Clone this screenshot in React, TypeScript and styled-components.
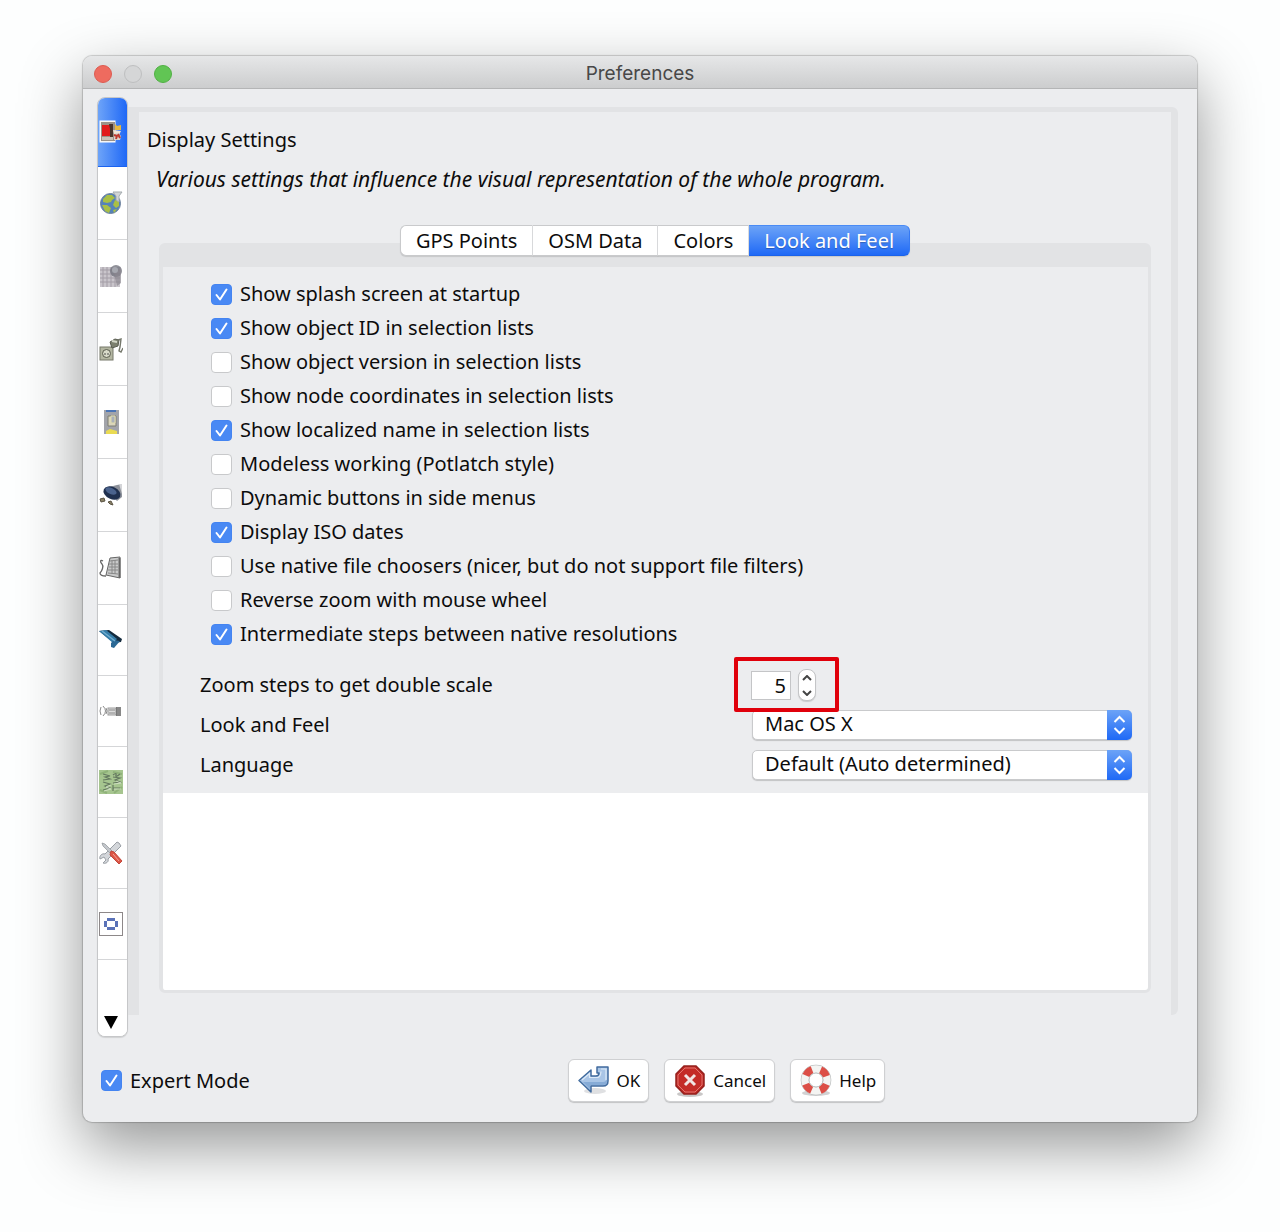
import React, { useState } from "react";
import styled, { createGlobalStyle, css } from "styled-components";

const GlobalStyle = createGlobalStyle`
  * { box-sizing: border-box; }
  body {
    margin: 0;
    background: #fdfefe;
    color: #0c0c0c;
    font-family: "Noto Sans", "Open Sans", sans-serif;
    font-size: 20px;
    line-height: 24px;
  }
  button, input, select { font: inherit; color: inherit; margin: 0; }
`;

const Page = styled.div`
  padding: 56px 83px 110px;
`;

const Window = styled.main`
  border-radius: 9px;
  background: #ecedef;
  box-shadow: 0 0 1px 1px rgba(0, 0, 0, 0.18), 0 24px 62px rgba(0, 0, 0, 0.41);
`;

const TitleBar = styled.header`
  display: grid;
  grid-template-columns: 1fr auto 1fr;
  align-items: center;
  height: 33px;
  padding: 3px 11px 0;
  border-bottom: 1px solid #b4b5b6;
  border-radius: 9px 9px 0 0;
  background: linear-gradient(#e6e7e8, #cccdce);
`;

const Lights = styled.div`
  display: flex;
  gap: 12px;
`;

const Light = styled.button<{ $fill: string; $edge: string }>`
  width: 18px;
  height: 18px;
  padding: 0;
  border: 1px solid ${(p) => p.$edge};
  border-radius: 50%;
  background: ${(p) => p.$fill};
`;

const Title = styled.h1`
  margin: 0;
  color: #484848;
  font: 400 19px/24px Inter, Roboto, sans-serif;
`;

const Body = styled.div`
  display: flex;
  align-items: flex-start;
  padding: 8px 19px 0 14px;
`;

const Sidebar = styled.nav`
  display: flex;
  flex-direction: column;
  flex: none;
  width: 31px;
  border: 1px solid #c6c7c9;
  border-radius: 8px;
  background: #fff;
  box-shadow: 0 1px 1px rgba(0, 0, 0, 0.12);
  overflow: hidden;
`;

const Category = styled.button<{ $tall?: boolean; $active?: boolean }>`
  display: flex;
  align-items: center;
  justify-content: center;
  height: ${(p) => (p.$tall ? 73 : 71)}px;
  padding: 0 3px 0 0;
  border: 0;
  border-bottom: 1px solid #d5d6d8;
  background: #fff;
  ${(p) =>
    p.$active &&
    css`
      height: 69px;
      border-color: #1b63f0;
      background: linear-gradient(90deg, #6ea4f8, #1f68f6);
    `}
`;

const MoreButton = styled.button`
  display: flex;
  align-items: flex-end;
  justify-content: center;
  height: 76px;
  padding: 0 3px 7px 0;
  border: 0;
  background: #fff;
`;

const Group = styled.section`
  flex: 1;
  min-width: 0;
  margin-top: 10px;
  padding: 15px 20px 22px;
  border: solid #e2e3e5;
  border-width: 5px 7px 0 11px;
  border-radius: 0 6px 6px 0;
`;

const Heading = styled.h2`
  margin: 0 0 0 -12px;
  font-size: 20px;
  font-weight: 400;
  line-height: 26px;
`;

const Description = styled.p`
  margin: 14px 0 34px -3px;
  font-size: 21px;
  font-style: italic;
`;

const TabList = styled.div`
  position: relative;
  display: flex;
  justify-content: center;
  margin-bottom: -13px;
`;

const Tab = styled.button<{ $active?: boolean }>`
  height: 31px;
  padding: 0 15px;
  border: 1px solid #c9cacc;
  border-left-width: 0;
  border-right-color: #dddee0;
  background: #fff;
  line-height: 24px;
  white-space: nowrap;
  box-shadow: 0 1px 1px rgba(0, 0, 0, 0.12);
  &:first-child {
    border-left-width: 1px;
    border-radius: 6px 0 0 6px;
  }
  &:last-child {
    border-radius: 0 6px 6px 0;
  }
  ${(p) =>
    p.$active &&
    css`
      border-color: #4a8bf5 #3579f3 #1a62ea;
      background: linear-gradient(#6ca3f7, #1f69f6);
      color: #fff;
      text-shadow: 0 1px 1px rgba(0, 0, 0, 0.25);
    `}
`;

const TabPanel = styled.div`
  border: solid #e2e3e5;
  border-width: 24px 3px 3px 4px;
  border-radius: 6px;
  background: #fff;
`;

const Settings = styled.div`
  padding: 10px 16px 8px 37px;
  background: #ecedef;
`;

const CheckList = styled.ul`
  margin: 0 0 14px;
  padding: 0 0 0 11px;
  list-style: none;
`;

const CheckRow = styled.li`
  display: flex;
  height: 34px;
`;

const CheckLabel = styled.label`
  display: flex;
  align-items: center;
  gap: 8px;
`;

const CheckHolder = styled.span`
  display: grid;
  width: 21px;
  height: 21px;
  > * { grid-area: 1 / 1; }
  svg { pointer-events: none; }
`;

const CheckInput = styled.input`
  appearance: none;
  width: 21px;
  height: 21px;
  border: 1px solid #c8c9cb;
  border-radius: 4px;
  background: #fff;
  &:checked {
    border-color: #4484f1;
    background: #4989f4;
  }
`;

const Field = styled.div`
  display: grid;
  grid-template-columns: 1fr 381px;
  align-items: center;
  height: 40px;
`;

const SpinnerArea = styled.div`
  position: relative;
  display: flex;
  align-items: center;
  gap: 7px;
`;

const NumberInput = styled.input`
  width: 40px;
  height: 29px;
  padding: 0 4px;
  border: 1px solid #c4c5c7;
  background: #fff;
  text-align: right;
  appearance: textfield;
  &::-webkit-inner-spin-button { appearance: none; margin: 0; }
`;

const Stepper = styled.div`
  display: flex;
  flex-direction: column;
  width: 18px;
  height: 32px;
  border: 1px solid #c4c5c7;
  border-radius: 8px;
  background: #fff;
  box-shadow: 0 1px 1px rgba(0, 0, 0, 0.15);
`;

const StepButton = styled.button`
  display: flex;
  flex: 1;
  align-items: center;
  justify-content: center;
  min-height: 0;
  padding: 0;
  border: 0;
  background: none;
`;

const Highlight = styled.span`
  position: absolute;
  z-index: 1;
  inset: -12px auto -11px -17px;
  width: 105px;
  border: 4px solid #e0000b;
  border-radius: 2px;
  pointer-events: none;
`;

const SelectHolder = styled.div`
  display: grid;
  margin-left: 1px;
  > * { grid-area: 1 / 1; }
`;

const SelectInput = styled.select`
  appearance: none;
  height: 30px;
  padding: 0 36px 2px 12px;
  border: 1px solid #c9cacc;
  border-radius: 5px;
  background: #fff;
  box-shadow: 0 1px 1px rgba(0, 0, 0, 0.18);
`;

const SelectArrows = styled.span`
  display: flex;
  align-items: center;
  justify-content: center;
  justify-self: end;
  width: 25px;
  height: 30px;
  border-radius: 0 5px 5px 0;
  background: linear-gradient(#6ca3f7, #1f69f6);
  pointer-events: none;
`;

const Blank = styled.div`
  height: 197px;
`;

const Footer = styled.footer`
  display: flex;
  align-items: center;
  gap: 24px;
  padding: 22px 18px 20px;
`;

const Actions = styled.div`
  display: flex;
  flex: 1;
  justify-content: center;
  gap: 15px;
`;

const ActionButton = styled.button`
  display: flex;
  align-items: center;
  gap: 6px;
  height: 43px;
  padding: 0 8px;
  border: 1px solid #cfd0d2;
  border-radius: 6px;
  background: #fff;
  font-size: 17px;
  box-shadow: 0 1px 1px rgba(0, 0, 0, 0.18);
`;

const Icon = ({ size = 24, children }: { size?: number; children: React.ReactNode }) => (
  <svg width={size} height={size} viewBox={`0 0 ${size} ${size}`} aria-hidden="true">
    {children}
  </svg>
);

const DisplayIcon = () => (
  <Icon>
    <rect x="1" y="1" width="15" height="21" fill="#f2eee8" stroke="#fff" />
    <rect x="2" y="2" width="14" height="19" fill="#9c9288" />
    <rect x="3" y="5" width="9" height="11" fill="#e11b1b" />
    <path d="M10 4h4v13h-3V9z" fill="#49352c" />
    <path d="M3 17h11v3H3z" fill="#c9c3ba" />
    <path d="M16 4l2 2 4-1v5h-6z" fill="#e6b840" />
    <path d="M14 10l8 1-2 4-5-1z" fill="#f0e5d5" />
    <path d="M15 14l4-1 3 3-1 4h-6z" fill="#d9d3cd" />
    <path d="M15 15l3 1-1 3M19 14l2 4" fill="none" stroke="#bf3a2e" strokeWidth="2" />
  </Icon>
);

const GlobeIcon = () => (
  <Icon>
    <circle cx="11.500" cy="12.500" r="10" fill="#5582ba" stroke="#6d819b" />
    <path d="M4 8l4-4 5 0 3 3-3 2-1 2-4 1-4-1zM16 9l4 1 0 5-3 2-3-3zM3 14l5 0 4 3-2 5-4-2zM14 19l4-1-3 4z" fill="#a9bf45" />
    <path d="M14 1h9l-3 4v6l-3-2V5z" fill="#d2d5d7" stroke="#a3aaae" strokeWidth="1" />
  </Icon>
);

const GridIcon = () => (
  <Icon>
    <path d="M1 3h20v20H1z" fill="#c9c5cb" />
    <path d="M1 6h20M1 10h20M1 14h20M1 18h20M4 3v20M8 3v20M12 3v20M16 3v20" stroke="#a39da6" strokeWidth="1" />
    <circle cx="17" cy="7" r="6" fill="#74767f" fillOpacity="0.8" />
    <path d="M15 9l7-6v16l-4 3z" fill="#8b8790" fillOpacity="0.7" />
    <circle cx="16" cy="6" r="3" fill="#a6a8b0" />
  </Icon>
);

const PlugIcon = () => (
  <Icon>
    <rect x="1" y="10" width="13" height="13" fill="#b3b6a1" stroke="#77796b" />
    <circle cx="7.500" cy="16.500" r="4" fill="#d9dbca" stroke="#5a5c4e" />
    <path d="M5.500 17h1M8.500 17h1" stroke="#222" strokeWidth="1.500" />
    <path d="M11 5l5-3 4 1-1 6-6 2z" fill="#7c806f" stroke="#5b5e52" />
    <path d="M13 4l5 1" stroke="#d5d8c9" strokeWidth="2" />
    <path d="M19 3l3-1-1 8-1 4 2 1 2-4" fill="none" stroke="#75786c" strokeWidth="1.400" />
  </Icon>
);

const ProjectionIcon = () => (
  <Icon>
    <rect x="5" width="15" height="24" fill="#a2a4aa" />
    <path d="M7 0h10v2H7z" fill="#4b75b6" />
    <path d="M9 6h8v10H9z" fill="#d9d5bd" stroke="#7c7d72" />
    <path d="M12 6h4v7h-4z" fill="#a9b0ba" stroke="#e1dcac" />
    <path d="M7 21l4-2 7 2v3H7z" fill="#eadb52" />
  </Icon>
);

const ConnectionIcon = () => (
  <Icon>
    <path d="M6 5l12-3 5-1v13l-5 4z" fill="#8d919a" />
    <path d="M20 1h3v10z" fill="#d4d5d8" />
    <ellipse cx="13" cy="10" rx="9" ry="6" transform="rotate(25 13 10)" fill="#20304e" />
    <ellipse cx="12" cy="8" rx="6" ry="3" transform="rotate(25 12 8)" fill="#4b638d" />
    <path d="M1 16l4-1 1 3-4 1zM9 19l3-1 2 4-3-1z" fill="#8a8267" stroke="#5b5444" />
  </Icon>
);

const KeyboardIcon = () => (
  <Icon>
    <path d="M4 5c-3-2-3 1-1 3s0 7-2 9q0 3 6 3" fill="none" stroke="#666" strokeWidth="1.300" />
    <path d="M11 2l10-1v21l-14-3z" fill="#c9caca" stroke="#666" />
    <path d="M11 5l8-1M10 8h9M10 11h9M9 14h10M9 17l10 1M13 4v14M16 4v14" stroke="#888" strokeWidth="1" />
    <path d="M20.500 2v20" stroke="#666" strokeWidth="2" />
  </Icon>
);

const ArrowIcon = () => (
  <Icon>
    <path d="M0 3l10-1 13 9-1 3-7 1z" fill="#142b3e" />
    <path d="M0 3l7-1 11 9-4 4z" fill="#347ca8" />
    <path d="M15 12l6 1-6 7-3-1v-4z" fill="#2c6995" />
    <path d="M3 3l13 10" stroke="#73afd0" strokeWidth="1.500" />
  </Icon>
);

const RemoteIcon = () => (
  <Icon>
    <path d="M4 7q5 5 0 10M2 8q-2 4 0 8M7 9q2 3 0 6" fill="none" stroke="#8b8b8b" />
    <rect x="9" y="9" width="8" height="7" fill="#dcdcdc" stroke="#999" />
    <path d="M10 11h6M10 14h6" stroke="#888" />
    <rect x="17" y="8" width="5" height="9" fill="#777" />
    <path d="M19 8v9M21 8v9" stroke="#999" />
  </Icon>
);

const ImageryIcon = () => (
  <Icon>
    <rect width="24" height="24" fill="#a6c58f" />
    <path d="M1 4l8-3M15 23l8-6M1 20l7 3M14 2l9 2" stroke="#8fb279" strokeWidth="2" />
    <path d="M4 20l7-2-5-2 5-2-7-2M4 10l7-1-5-2 5-1-7-2M14 21v-6M14 18h7M14 13l7-1-5-2 5-2-7-1M14 5q4-3 3 0t4-1" fill="none" stroke="#64785f" strokeWidth="1.200" />
    <path d="M5 21l7-2-5-2 5-2M15 19h7M15 14l7-1-5-2" fill="none" stroke="#d7e5cc" strokeWidth="0.800" />
  </Icon>
);

const ToolsIcon = () => (
  <Icon>
    <path d="M20 2l2 3L9 18c1 3-2 5-5 4l3-3-2-3-4 2c-1-3 2-6 5-5L18 1z" fill="#d3d6da" stroke="#9a9fa5" />
    <path d="M3 2l3 1 7 7-2 2-7-7z" fill="#c4c7cc" stroke="#8e9398" strokeWidth="0.700" />
    <path d="M12 10l3 1 8 9-3 3-9-9z" fill="#dc5646" stroke="#c2483b" />
    <path d="M14 13l6 7" stroke="#f5a297" />
  </Icon>
);

const ValidatorIcon = () => (
  <Icon>
    <rect x="0.5" y="0.5" width="23" height="23" fill="#fff" stroke="#8d8889" />
    <path d="M8 7.500h8M8 16.500h8M6.500 9v6M17.500 9v6" stroke="#5a72b8" strokeWidth="3" />
  </Icon>
);

const OkIcon = () => (
  <Icon size={34}>
    <ellipse cx="18" cy="27" rx="11" ry="3" fill="#dfe0e2" />
    <path d="M20 3h11v14q0 5-5 5H14v6L2 16.500 14 6v6h5q3 0 3-3h-2z" fill="#a9c5e6" stroke="#416b9e" strokeWidth="1.500" strokeLinejoin="round" />
    <path d="M6 18h20q3 0 4-3v2q0 4-4 4H13v4z" fill="#6f99cc" fillOpacity="0.600" />
    <path d="M5 16l7.500-6.500V13.500h8q3 0 3.500-6M24 5h5v11" fill="none" stroke="#dce9f7" strokeWidth="1.200" />
  </Icon>
);

const CancelIcon = () => (
  <Icon size={34}>
    <ellipse cx="17" cy="30" rx="13" ry="3" fill="#c9c7c7" />
    <path d="M11 2h12l8 8v12l-8 8H11l-8-8V10z" fill="#c42b27" stroke="#94201d" strokeWidth="1.500" />
    <path d="M12 4h10l7 7v10l-7 7H12l-7-7V11z" fill="none" stroke="#e27771" />
    <path d="M12 11l10 10M22 11L12 21" stroke="#f1e4e3" strokeWidth="3" />
  </Icon>
);

const HelpIcon = () => (
  <Icon size={34}>
    <ellipse cx="17" cy="29" rx="14" ry="3" fill="#d2d2d3" />
    <circle cx="17" cy="16" r="11" fill="none" stroke="#a9adae" strokeWidth="8.500" />
    <circle cx="17" cy="16" r="11" fill="none" stroke="#f4f4f2" strokeWidth="7.500" />
    <circle cx="17" cy="16" r="11" fill="none" stroke="#dc4f47" strokeWidth="7.500" strokeDasharray="8.640 8.640" strokeDashoffset="-4.320" />
    <circle cx="17" cy="16" r="7" fill="#fff" stroke="#b9bcbd" />
  </Icon>
);

const Arrows = () => (
  <svg width="13" height="20" viewBox="0 0 13 20" aria-hidden="true">
    <path d="M1.500 7L6.500 2l5 5M1.500 13l5 5 5-5" fill="none" stroke="#fff" strokeWidth="2" />
  </svg>
);

const Chevron = ({ down }: { down?: boolean }) => (
  <svg width="10" height="6" viewBox="0 0 10 6" aria-hidden="true">
    <path d={down ? "M1 1l4 4 4-4" : "M1 5l4-4 4 4"} fill="none" stroke="#444" strokeWidth="2" />
  </svg>
);

const categories = [
  { name: "Display Settings", icon: DisplayIcon, tall: false },
  { name: "Connection Settings", icon: GlobeIcon, tall: true },
  { name: "Map Settings", icon: GridIcon, tall: true },
  { name: "Plugins", icon: PlugIcon, tall: true },
  { name: "Toolbar", icon: ProjectionIcon, tall: true },
  { name: "Audio Settings", icon: ConnectionIcon, tall: true },
  { name: "Keyboard Shortcuts", icon: KeyboardIcon, tall: true },
  { name: "Direction", icon: ArrowIcon, tall: false },
  { name: "Remote Control", icon: RemoteIcon, tall: false },
  { name: "Imagery", icon: ImageryIcon, tall: false },
  { name: "Advanced", icon: ToolsIcon, tall: false },
  { name: "Validator", icon: ValidatorIcon, tall: false },
];

const options: [string, boolean][] = [
  ["Show splash screen at startup", true],
  ["Show object ID in selection lists", true],
  ["Show object version in selection lists", false],
  ["Show node coordinates in selection lists", false],
  ["Show localized name in selection lists", true],
  ["Modeless working (Potlatch style)", false],
  ["Dynamic buttons in side menus", false],
  ["Display ISO dates", true],
  ["Use native file choosers (nicer, but do not support file filters)", false],
  ["Reverse zoom with mouse wheel", false],
  ["Intermediate steps between native resolutions", true],
];

const tabs = ["GPS Points", "OSM Data", "Colors", "Look and Feel"];

function Check({ label, initial }: { label: string; initial: boolean }) {
  const [checked, setChecked] = useState(initial);
  return (
    <CheckLabel>
      <CheckHolder>
        <CheckInput type="checkbox" checked={checked} onChange={() => setChecked(!checked)} />
        {checked && (
          <svg width="21" height="21" viewBox="0 0 21 21" aria-hidden="true">
            <path d="M5.500 11l3.500 4.500 6.500-10" fill="none" stroke="#fff" strokeWidth="2" strokeLinecap="round" strokeLinejoin="round" />
          </svg>
        )}
      </CheckHolder>
      {label}
    </CheckLabel>
  );
}

function Dropdown({ id, label, value }: { id: string; label: string; value: string }) {
  return (
    <Field>
      <label htmlFor={id}>{label}</label>
      <SelectHolder>
        <SelectInput id={id} defaultValue={value}>
          <option>{value}</option>
        </SelectInput>
        <SelectArrows>
          <Arrows />
        </SelectArrows>
      </SelectHolder>
    </Field>
  );
}

export default function App() {
  const [steps, setSteps] = useState(5);
  const [tab, setTab] = useState("Look and Feel");
  return (
    <Page>
      <GlobalStyle />
      <Window>
        <TitleBar>
          <Lights>
            <Light $fill="#ee6b5f" $edge="#dd5a50" aria-label="Close" />
            <Light $fill="#d5d6d7" $edge="#bebfc0" aria-label="Minimize" />
            <Light $fill="#61c554" $edge="#50b043" aria-label="Zoom" />
          </Lights>
          <Title>Preferences</Title>
        </TitleBar>
        <Body>
          <Sidebar aria-label="Categories">
            {categories.map(({ name, icon: Glyph, tall }, i) => (
              <Category key={name} aria-label={name} $tall={tall} $active={i === 0}>
                <Glyph />
              </Category>
            ))}
            <MoreButton aria-label="More categories">
              <svg width="14" height="13" viewBox="0 0 14 13" aria-hidden="true">
                <path d="M0 0h14L7 13z" fill="#000" />
              </svg>
            </MoreButton>
          </Sidebar>
          <Group>
            <Heading>Display Settings</Heading>
            <Description>
              Various settings that influence the visual representation of the whole program.
            </Description>
            <TabList role="tablist">
              {tabs.map((name) => (
                <Tab key={name} role="tab" aria-selected={tab === name} $active={tab === name} onClick={() => setTab(name)}>
                  {name}
                </Tab>
              ))}
            </TabList>
            <TabPanel role="tabpanel">
              <Settings>
                <CheckList>
                  {options.map(([label, on]) => (
                    <CheckRow key={label}>
                      <Check label={label} initial={on} />
                    </CheckRow>
                  ))}
                </CheckList>
                <Field>
                  <label htmlFor="steps">Zoom steps to get double scale</label>
                  <SpinnerArea>
                    <NumberInput id="steps" type="number" value={steps} onChange={(e) => setSteps(Number(e.target.value))} />
                    <Stepper>
                      <StepButton aria-label="Increase" onClick={() => setSteps(steps + 1)}>
                        <Chevron />
                      </StepButton>
                      <StepButton aria-label="Decrease" onClick={() => setSteps(steps - 1)}>
                        <Chevron down />
                      </StepButton>
                    </Stepper>
                    <Highlight />
                  </SpinnerArea>
                </Field>
                <Dropdown id="laf" label="Look and Feel" value="Mac OS X" />
                <Dropdown id="language" label="Language" value="Default (Auto determined)" />
              </Settings>
              <Blank />
            </TabPanel>
          </Group>
        </Body>
        <Footer>
          <Check label="Expert Mode" initial />
          <Actions>
            <ActionButton>
              <OkIcon />
              OK
            </ActionButton>
            <ActionButton>
              <CancelIcon />
              Cancel
            </ActionButton>
            <ActionButton>
              <HelpIcon />
              Help
            </ActionButton>
          </Actions>
        </Footer>
      </Window>
    </Page>
  );
}
